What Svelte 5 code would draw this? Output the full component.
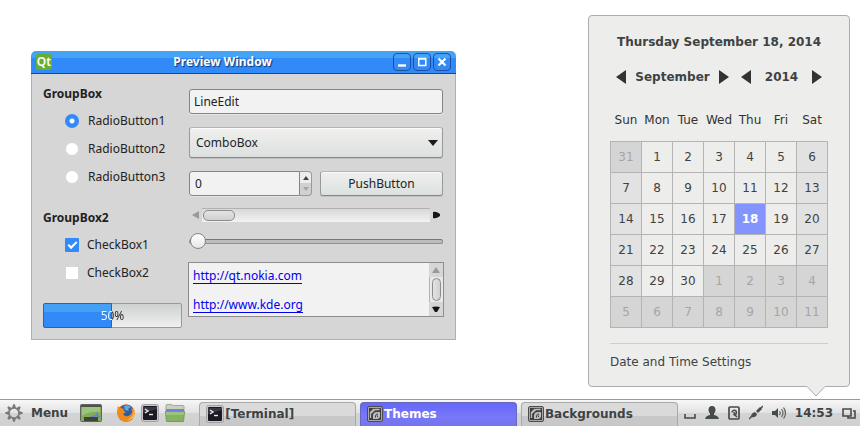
<script>
  let radio = $state(1);
  let check1 = $state(true);
  let check2 = $state(false);
  let line = $state('LineEdit');
  let spin = $state(0);
  let scroll = $state(0);
  let slide = $state(0);
  let progress = $state(50);

  const weekdays = ['Sun', 'Mon', 'Tue', 'Wed', 'Thu', 'Fri', 'Sat'];
  const weeks = Array.from({ length: 6 }, (_, w) =>
    weekdays.map((_, d) => {
      const n = w * 7 + d;
      const other = n < 1 || n > 30;
      return { day: n < 1 ? 31 : n > 30 ? n - 30 : n, other, weekend: d === 0 || d === 6, today: n === 18 };
    })
  );
  const tasks = [
    { name: '[Terminal]', icon: 'term', active: false },
    { name: 'Themes', icon: 'mint', active: true },
    { name: 'Backgrounds', icon: 'mint', active: false }
  ];
</script>

{#snippet terminal()}
  <svg width="18" height="18" viewBox="0 0 18 18" aria-hidden="true">
    <rect x=".5" y=".5" width="17" height="17" rx="2" fill="#c8c8c8" stroke="#a2a2a2" />
    <rect x="2" y="2" width="14" height="14" rx="1" fill="#1c1824" />
    <path d="M2 9 16 5V3H2z" fill="#3b3643" />
    <path d="m4 5 3 2-3 2" fill="none" stroke="#eee" stroke-width="1.4" />
    <path d="M8 10.5h4" stroke="#eee" stroke-width="1.4" />
  </svg>
{/snippet}

{#snippet mint()}
  <svg width="16" height="16" viewBox="0 0 16 16" aria-hidden="true">
    <rect x=".5" y=".5" width="15" height="15" rx="1.5" fill="#a8a8a8" stroke="#4c4c4c" />
    <rect x="2" y="2" width="12" height="12" fill="#3f3f3f" />
    <path d="M3.500 12V7.500L8 3.500h4.500M3 7l4-4" fill="none" stroke="#bdbdbd" stroke-width="1.300" />
    <path d="M6 13V9q.5-3 4-3h3v4.500q-.5 2.500-3 2.500z" fill="#bdbdbd" />
    <path d="M8.500 11.500V10q.3-2 2.500-2M10.500 11V9.500" fill="none" stroke="#3f3f3f" />
  </svg>
{/snippet}

{#snippet arrow(right)}
  <svg width="10" height="14" viewBox="0 0 10 14" aria-hidden="true">
    <path d={right ? 'M0 0v14l10-7z' : 'M10 0v14L0 7z'} fill="#333" />
  </svg>
{/snippet}

<div class="desktop">
  <main>
    <section class="window" aria-label="Preview Window">
      <header>
        <span class="qt">Qt</span>
        <h1>Preview Window</h1>
        <div class="winbtns">
          <button aria-label="Minimize"><svg width="16" height="16"><path d="M4 11.5h8" stroke="#fff" stroke-width="2.4" /></svg></button>
          <button aria-label="Maximize"><svg width="16" height="16"><path d="M4.75 4.5h7v7h-7z M4 5h8" fill="none" stroke="#fff" stroke-width="1.5" /></svg></button>
          <button aria-label="Close"><svg width="16" height="16"><path d="m4.5 4.5 7 7m0-7-7 7" stroke="#fff" stroke-width="2.2" /></svg></button>
        </div>
      </header>
      <div class="body">
        <div class="left">
          <fieldset>
            <legend>GroupBox</legend>
            {#each [1, 2, 3] as n}
              <label><input type="radio" name="group" value={n} bind:group={radio} />RadioButton{n}</label>
            {/each}
          </fieldset>
          <fieldset>
            <legend>GroupBox2</legend>
            <label><input type="checkbox" bind:checked={check1} />CheckBox1</label>
            <label><input type="checkbox" bind:checked={check2} />CheckBox2</label>
          </fieldset>
          <div class="progress" role="progressbar" aria-label="Progress" aria-valuenow={progress} aria-valuemin="0" aria-valuemax="100">
            <div class="fill" style:width="{progress}%"></div>
            <span>{progress}%</span>
          </div>
        </div>

        <div class="right">
          <input class="field" type="text" aria-label="Line edit" bind:value={line} />
          <div class="combo">
            <select aria-label="Combo box"><option>ComboBox</option></select>
            <svg width="10" height="6" aria-hidden="true"><path d="M0 0h10L5 6z" fill="#1c1c1c" /></svg>
          </div>
          <div class="pair">
            <div class="spin">
              <input class="field" type="text" inputmode="numeric" aria-label="Spin box" bind:value={spin} />
              <div class="steps">
                <button aria-label="Increase" onclick={() => spin++}><svg width="6" height="4"><path d="M0 4h6L3 0z" fill="#444" /></svg></button>
                <button aria-label="Decrease" disabled={spin <= 0} onclick={() => spin--}><svg width="6" height="4"><path d="M0 0h6L3 4z" fill="#a5a5a5" /></svg></button>
              </div>
            </div>
            <button class="push">PushButton</button>
          </div>
          <div class="hscroll">
            <button aria-label="Scroll left" onclick={() => (scroll = 0)}><svg width="7" height="8"><path d="M7 0v8L0 4z" fill="#999" /></svg></button>
            <input type="range" aria-label="Scroll bar" bind:value={scroll} />
            <button aria-label="Scroll right" onclick={() => (scroll = 100)}><svg width="7" height="8"><path d="M0 1q3-1 7 2v2q-4 3-7 2z" fill="#151515" /></svg></button>
          </div>
          <input class="slider" type="range" aria-label="Slider" bind:value={slide} />
          <div class="browser">
            <div class="links">
              <a href="http://qt.nokia.com">http://qt.nokia.com</a>
              <a href="http://www.kde.org">http://www.kde.org</a>
            </div>
            <div class="vscroll">
              <button aria-label="Scroll up"><svg width="8" height="6"><path d="M0 6h8L4 0z" fill="#999" /></svg></button>
              <div class="track"><div class="thumb"></div></div>
              <button aria-label="Scroll down"><svg width="8" height="6"><path d="M0 1q4-1 8 0L5 6H3z" fill="#151515" /></svg></button>
            </div>
          </div>
        </div>
      </div>
    </section>

    <section class="calendar" aria-label="Calendar">
      <h2>Thursday September 18, 2014</h2>
      <div class="nav">
        <button aria-label="Previous month">{@render arrow(false)}</button>
        <span class="month">September</span>
        <button aria-label="Next month">{@render arrow(true)}</button>
        <button class="prevyear" aria-label="Previous year">{@render arrow(false)}</button>
        <span class="year">2014</span>
        <button aria-label="Next year">{@render arrow(true)}</button>
      </div>
      <table>
        <thead>
          <tr>{#each weekdays as d}<th scope="col">{d}</th>{/each}</tr>
        </thead>
        <tbody>
          {#each weeks as week}
            <tr>
              {#each week as c}
                <td class:weekend={c.weekend} class:other={c.other} class:today={c.today}>{c.day}</td>
              {/each}
            </tr>
          {/each}
        </tbody>
      </table>
      <a class="settings" href="#settings">Date and Time Settings</a>
      <svg class="tail" width="18" height="11" viewBox="0 0 18 11" aria-hidden="true">
        <path d="M0 0h18v1L9 10.500 0 1z" fill="#ededeb" /><path d="M0 .5 9 10l9-9.500" fill="none" stroke="#acacac" />
      </svg>
    </section>
  </main>

  <footer>
    <button class="menu">
      <svg width="18" height="18" viewBox="-9 -9 18 18" aria-hidden="true">
        <circle r="5" fill="none" stroke="#77797a" stroke-width="1.500" />
        {#each [0, 45, 90, 135, 180, 225, 270, 315] as a}
          <path d="M-2-5-.8-8.700H.8L2-5z" fill="#77797a" transform="rotate({a})" />
        {/each}
      </svg>
      Menu
    </button>
    <div class="launchers">
      <button class="desk" aria-label="Show desktop">
        <svg width="22" height="18" viewBox="0 0 22 18">
          <rect x=".5" y=".5" width="21" height="17" rx="1" fill="#80ad5b" stroke="#626262" />
          <path d="M1 1h20v2H1z" fill="#505050" /><path d="M2 3h18v5Q9 7 2 12z" fill="#9bc578" />
          <path d="M11 12.500h3l1-1h1l1-2 1 3h2" fill="none" stroke="#7474e8" stroke-width="1.300" />
          <path d="M4 13h14v4H4z" fill="#3c4630" />
        </svg>
      </button>
      <button aria-label="Firefox">
        <svg width="18" height="18" viewBox="0 0 18 18">
          <circle cx="9" cy="9" r="8.700" fill="#d9601c" />
          <circle cx="9.500" cy="7.500" r="6.800" fill="#2c5da6" />
          <path d="M7 2q4-2 7 1l-3 2 1 2-4-1z" fill="#62a9dc" />
          <path d="M1 2q1 2 3 2l3 1q-1 1 0 2l2 1-3 2q2 3 5 2 4-1 4-5l-1-3q4 2 3.500 6Q16 17 9 17.700 1 17 .4 9 0 5 1 2z" fill="#ed8a20" />
          <path d="M15 3q3 4 1 8-2 4-6 5 6 0 7.500-6Q18 5 15 3z" fill="#f8d34a" />
        </svg>
      </button>
      <button aria-label="Terminal">{@render terminal()}</button>
      <button aria-label="Files">
        <svg width="20" height="18" viewBox="0 0 20 18">
          <path d="M1 1.500q0-1 1-1h5l1 1h10q1 0 1 1V9H1z" fill="#c9cfc2" stroke="#a0ad92" />
          <path d="M1 6h18" stroke="#777de5" stroke-width="2" />
          <path d="M.5 7.500h19l-1 10h-17z" fill="#86b361" stroke="#789b5a" /><path d="M1 8h18v3H1z" fill="#9cc47b" />
        </svg>
      </button>
    </div>
    <nav aria-label="Open windows">
      {#each tasks as t}
        <button class="task" class:active={t.active}>
          {#if t.icon === 'term'}{@render terminal()}{:else}{@render mint()}{/if}
          {t.name}
        </button>
      {/each}
    </nav>
    <div class="tray">
      <svg width="12" height="16" viewBox="0 0 12 16" aria-hidden="true"><path d="M1 9v4h10V9" fill="none" stroke="#464b4b" stroke-width="1.600" /></svg>
      <svg width="14" height="16" viewBox="0 0 14 16" aria-hidden="true"><path d="M7 1q3.500 0 3.500 4 0 2-1.500 3.500V10q4 .5 5 4H0Q1 10.500 5 10V8.500Q3.500 7 3.500 5 3.500 1 7 1z" fill="#464b4b" /></svg>
      <svg width="12" height="16" viewBox="0 0 12 16" aria-hidden="true"><rect x="1" y="2" width="10" height="12" rx="1" fill="none" stroke="#464b4b" stroke-width="1.700" /><path d="M4 7.500a2.200 2.200 0 1 1 2.200 2.200V7" fill="none" stroke="#464b4b" stroke-width="1.500" /><path d="m6 9 3 3" stroke="#464b4b" stroke-width="1.500" /></svg>
      <svg width="14" height="16" viewBox="0 0 14 16" aria-hidden="true"><path d="m0 14 4-4M11 4l3-3" stroke="#464b4b" stroke-width="1.500" /><path d="M2 12q0-4 4-5l2 2q-1 4-6 3zM7 6l4-4 2 2-4 4z" fill="#464b4b" /></svg>
      <svg width="14" height="16" viewBox="0 0 14 16" aria-hidden="true"><path d="M0 6h3l3-3v10l-3-3H0z" fill="#464b4b" /><path d="M7.500 6q1.500 2 0 4M9.500 4q3 4 0 8M11.500 2.500q4 5.500 0 11" fill="none" stroke="#5b6060" stroke-width="1.200" /></svg>
      <time>14:53</time>
      <svg width="14" height="16" viewBox="0 0 14 16" aria-hidden="true"><path d="M1 4h8v7H1zM11 6h2v7H6v-2" fill="none" stroke="#464b4b" stroke-width="1.600" /></svg>
    </div>
  </footer>
</div>

<style>
  :global(body) { background: #fff; }
  *, *::before, *::after { box-sizing: border-box; }
  svg { display: block; flex: none; }
  button, input, select { font: inherit; color: inherit; margin: 0; }
  button { display: flex; align-items: center; justify-content: center; padding: 0; border: 0; background: none; }

  .desktop { display: flex; flex-direction: column; min-height: 100vh; font: 12px/16px 'DejaVu Sans', sans-serif; color: #3e4343; }
  main { flex: 1; display: flex; align-items: flex-start; justify-content: space-between; gap: 24px; padding: 15px 10px 12px 31px; }

  .window { flex: 0 1 425px; margin-top: 36px; font: 12px/16px 'Noto Sans', sans-serif; color: #222; }
  header { display: flex; align-items: center; height: 23px; padding: 0 5px; border-bottom: 1px solid #23418f; border-radius: 5px 5px 0 0; background: linear-gradient(#45a3f6 0 7px, #318af7 7px); }
  .qt { width: 16px; height: 16px; border-radius: 2px; background: #65ad35; color: #fff; font-weight: 600; text-align: center; line-height: 15px; }
  h1 { flex: 1; margin: 0; text-align: center; font-size: 12px; line-height: 16px; color: #fff; text-shadow: 1px 1px 1px #15356f; }
  .winbtns { display: flex; gap: 2px; }
  .winbtns button { width: 18px; height: 18px; border: 1px solid #214f9f; border-radius: 4px; }

  .body { display: grid; grid-template-columns: 139px 1fr; gap: 6px; padding: 12px 11px 11px; border: 1px solid #b0b0b0; border-top: 0; background: #d6d6d6; }
  .left { display: flex; flex-direction: column; }
  fieldset { margin: 0 0 19px; padding: 5px 0 0 22px; border: 0; }
  fieldset + fieldset { margin-bottom: 16px; }
  legend { margin-left: -22px; padding: 0; font-weight: bold; }
  fieldset label { display: flex; align-items: center; gap: 8px; height: 28px; }
  fieldset input { appearance: none; width: 14px; height: 14px; background: #fff; border: 1px solid #d6d6d6; }
  input[type='radio'] { border-radius: 50%; margin-right: 1px; }
  input[type='radio']:checked { border: 0; background: radial-gradient(circle, #fff 2px, #318af7 3px); }
  input[type='checkbox']:checked { border: 0; border-radius: 1px; background: #318af7; display: grid; place-items: center; }
  input[type='checkbox']:checked::after { content: ''; width: 9px; height: 5px; border: solid #fff; border-width: 0 0 2px 2px; transform: rotate(-45deg) translate(1px, -1px); }
  .progress { position: relative; height: 25px; border: 1px solid #999; border-radius: 2px; background: linear-gradient(#cdd1d1, #f0f0f0); }
  .fill { position: absolute; inset: -1px auto -1px -1px; border: 1px solid #2864b4; border-radius: 2px 0 0 2px; background: linear-gradient(#43a0f5 0 8px, #318af7 8px); }
  .progress span { position: relative; display: block; line-height: 23px; text-align: center; color: transparent; background: linear-gradient(90deg, #fff 50%, #222 50%); background-clip: text; }

  .right { display: flex; flex-direction: column; padding: 3px 1px 0; }
  .field { width: 100%; height: 25px; padding: 0 4px; border: 1px solid #858585; border-radius: 3px; background: #f2f2f2; box-shadow: 0 1px #e6e6e6; }
  .combo { position: relative; margin-top: 13px; }
  .combo select, .push { appearance: none; width: 100%; height: 31px; padding: 0 6px; border: 1px solid #999; border-top-color: #b5b5b5; border-bottom-color: #858585; border-radius: 3px; background: linear-gradient(#f0f0ee, #dbe0df); box-shadow: 0 1px #c2c2c2, inset 0 1px #fafafa; }
  .combo select { display: block; }
  .combo svg { position: absolute; right: 5px; top: 13px; pointer-events: none; }
  .pair { display: grid; grid-template-columns: 1fr 1fr; gap: 8px; margin-top: 13px; }
  .push { height: 25px; }
  .spin { display: flex; }
  .spin .field { min-width: 0; padding: 0 5px; border-radius: 3px 0 0 3px; }
  .steps { display: flex; flex-direction: column; flex: none; width: 12px; border: 1px solid #999; border-left: 0; border-radius: 0 4px 4px 0; background: linear-gradient(#ededed 50%, #d0d2d2 50%); }
  .steps button { flex: 1; }

  .hscroll { display: flex; align-items: center; height: 14px; margin-top: 12px; }
  .hscroll button { width: 13px; height: 14px; }
  .hscroll input { appearance: none; flex: 1; min-width: 0; height: 14px; border-top: 1px solid #b2b2b2; background: linear-gradient(#d8d8d8, #f2f2f2); }
  .hscroll input::-webkit-slider-thumb { appearance: none; width: 32px; height: 11px; border: 1px solid #8c8c8c; border-radius: 5px; background: linear-gradient(#e4e4e4, #d0d0d0); margin-left: 1px; }
  .slider { appearance: none; width: 100%; height: 16px; margin: 11px 0 13px; background: none; }
  .slider::-webkit-slider-runnable-track { height: 5px; border: 1px solid #909090; border-top-color: #77756f; border-radius: 3px; background: #bdbdbd; }
  .slider::-webkit-slider-thumb { appearance: none; width: 16px; height: 16px; margin-top: -7px; border: 1px solid #858585; border-radius: 50%; background: linear-gradient(#fff, #e4e7e7); }
  .browser { display: flex; height: 55px; margin: 0 -1px; border: 1px solid #8c8c8c; background: #f2f2f2; overflow: hidden; }
  .links { flex: 1; display: flex; flex-direction: column; align-items: flex-start; gap: 13px; padding: 5px 4px; }
  .links a { color: #0000f0; text-decoration: none; border-bottom: 1px solid; line-height: 15px; }
  .vscroll { display: flex; flex-direction: column; width: 14px; background: #d6d6d6; }
  .vscroll button { height: 14px; }
  .track { flex: 1; padding: 1px 2px; border-left: 1px solid #b2b2b2; background: #e9e9e9; }
  .thumb { height: 100%; border: 1px solid #8c8c8c; border-radius: 5px; background: linear-gradient(90deg, #e4e4e4, #d0d0d0); }

  .calendar { position: relative; flex: none; width: 262px; padding: 18px 21px 16px; border: 1px solid #acacac; border-radius: 4px; background: #ededeb; }
  h2 { margin: 0; text-align: center; font-size: 12px; line-height: 16px; white-space: nowrap; }
  .nav { display: flex; align-items: center; margin-top: 19px; padding: 0 6px; font-weight: bold; }
  .month { flex: 1; text-align: center; }
  .prevyear { margin-left: 12px; }
  .year { width: 61px; text-align: center; }
  table { width: 218px; margin-top: 19px; border-collapse: collapse; table-layout: fixed; text-align: center; }
  th { height: 37px; padding: 0 0 5px; font-weight: normal; color: #303333; white-space: nowrap; }
  td { height: 31px; padding: 1px 0 0; border: 1px solid #b4b4b4; }
  .weekend { background: #e2e2e2; }
  .other { background: #d5d5d5; color: #a5a5a5; }
  .today { background: #8494ff; color: #fff; font-weight: bold; border-top-color: #6470df; }
  .settings { display: block; margin-top: 15px; padding-top: 10px; border-top: 1px solid #cecece; color: inherit; text-decoration: none; }
  .tail { position: absolute; right: 24px; bottom: -11px; }

  footer { display: flex; height: 27px; padding: 0 4px 0 5px; border-top: 1px solid #999; background: linear-gradient(#f7f7f7, #e2e2e2 50%, #d4d4d4 50%, #d0d0d0); font-weight: bold; overflow: hidden; }
  .menu { gap: 8px; }
  .launchers { display: flex; align-items: center; gap: 6px; margin: 0 14px 0 12px; }
  .desk { margin-right: 9px; }
  nav { flex: 1; display: flex; gap: 4px; padding-top: 2px; }
  .task { flex: 1; min-width: 0; justify-content: flex-start; gap: 1px; padding: 0 0 2px 6px; border: 1px solid #a9a9a9; border-bottom: 0; border-radius: 4px 4px 0 0; background: linear-gradient(#dadada 55%, #c8c8c8 55%); }
  .task.active { border-color: #6667bd; background: linear-gradient(#6666fa, #7878f8 60%, #7474ee); color: #fff; }
  .tray { display: flex; align-items: center; gap: 9px; padding-left: 6px; }
</style>
